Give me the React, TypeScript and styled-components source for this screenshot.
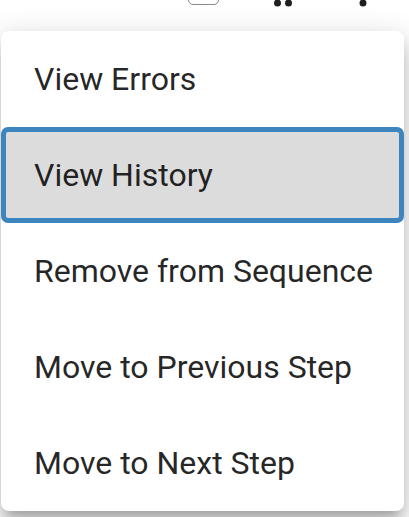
import React from "react";
import styled, { createGlobalStyle } from "styled-components";

const GlobalStyle = createGlobalStyle`
  html, body {
    margin: 0;
    padding: 0;
    background: #ffffff;
    overflow: hidden;
  }
  body {
    font-family: Roboto, "Liberation Sans", sans-serif;
    width: 409px;
    height: 517px;
  }
`;

const Page = styled.div`
  position: relative;
  width: 409px;
  height: 517px;
  overflow: hidden;
  background: #ffffff;
`;

const Toolbar = styled.div`
  display: flex;
  align-items: flex-end;
  height: 40px;
  margin-top: -33px;
  padding-left: 188px;
`;

const CheckBox = styled.div`
  width: 31px;
  height: 30px;
  border: 1.5px solid #8a8a8a;
  border-radius: 5px;
  margin-bottom: 2px;
  box-sizing: border-box;
`;

const DragHandle = styled.svg`
  margin-left: 55px;
  display: block;
`;

const MoreIcon = styled.svg`
  margin-left: 67px;
  display: block;
`;

const Menu = styled.ul`
  position: absolute;
  top: 31px;
  left: 1px;
  width: 403px;
  margin: 0;
  padding: 0;
  list-style: none;
  background: #ffffff;
  border-radius: 8px;
  box-shadow: 0 10px 10px -6px rgba(0, 0, 0, 0.2),
    0 16px 20px 2px rgba(0, 0, 0, 0.14), 0 6px 28px 4px rgba(0, 0, 0, 0.12);
  display: flex;
  flex-direction: column;
`;

const Item = styled.li<{ $focused?: boolean }>`
  height: 96px;
  box-sizing: border-box;
  display: flex;
  align-items: center;
  padding-left: 28px;
  border: 5px solid ${(p) => (p.$focused ? "#3d85be" : "transparent")};
  border-radius: 7px;
  background: ${(p) => (p.$focused ? "#dcdcdc" : "transparent")};
  color: rgba(0, 0, 0, 0.87);
  font-size: 32px;
  line-height: 1.5;
  white-space: nowrap;
`;

const items = [
  "View Errors",
  "View History",
  "Remove from Sequence",
  "Move to Previous Step",
  "Move to Next Step",
];

export default function App() {
  return (
    <Page>
      <GlobalStyle />
      <Toolbar>
        <CheckBox />
        <DragHandle width="18" height="30" viewBox="0 0 18 30">
          <circle cx="3.5" cy="5" r="3.5" fill="#1f1f1f" />
          <circle cx="14.5" cy="5" r="3.5" fill="#1f1f1f" />
          <circle cx="3.5" cy="15" r="3.5" fill="#1f1f1f" />
          <circle cx="14.5" cy="15" r="3.5" fill="#1f1f1f" />
          <circle cx="3.5" cy="26" r="3.5" fill="#1f1f1f" />
          <circle cx="14.5" cy="26" r="3.5" fill="#1f1f1f" />
        </DragHandle>
        <MoreIcon width="8" height="30" viewBox="0 0 8 30">
          <circle cx="4" cy="5" r="3.5" fill="#1f1f1f" />
          <circle cx="4" cy="15" r="3.5" fill="#1f1f1f" />
          <circle cx="4" cy="26" r="3.5" fill="#1f1f1f" />
        </MoreIcon>
      </Toolbar>
      <Menu>
        {items.map((label) => (
          <Item key={label} $focused={label === "View History"}>
            {label}
          </Item>
        ))}
      </Menu>
    </Page>
  );
}
